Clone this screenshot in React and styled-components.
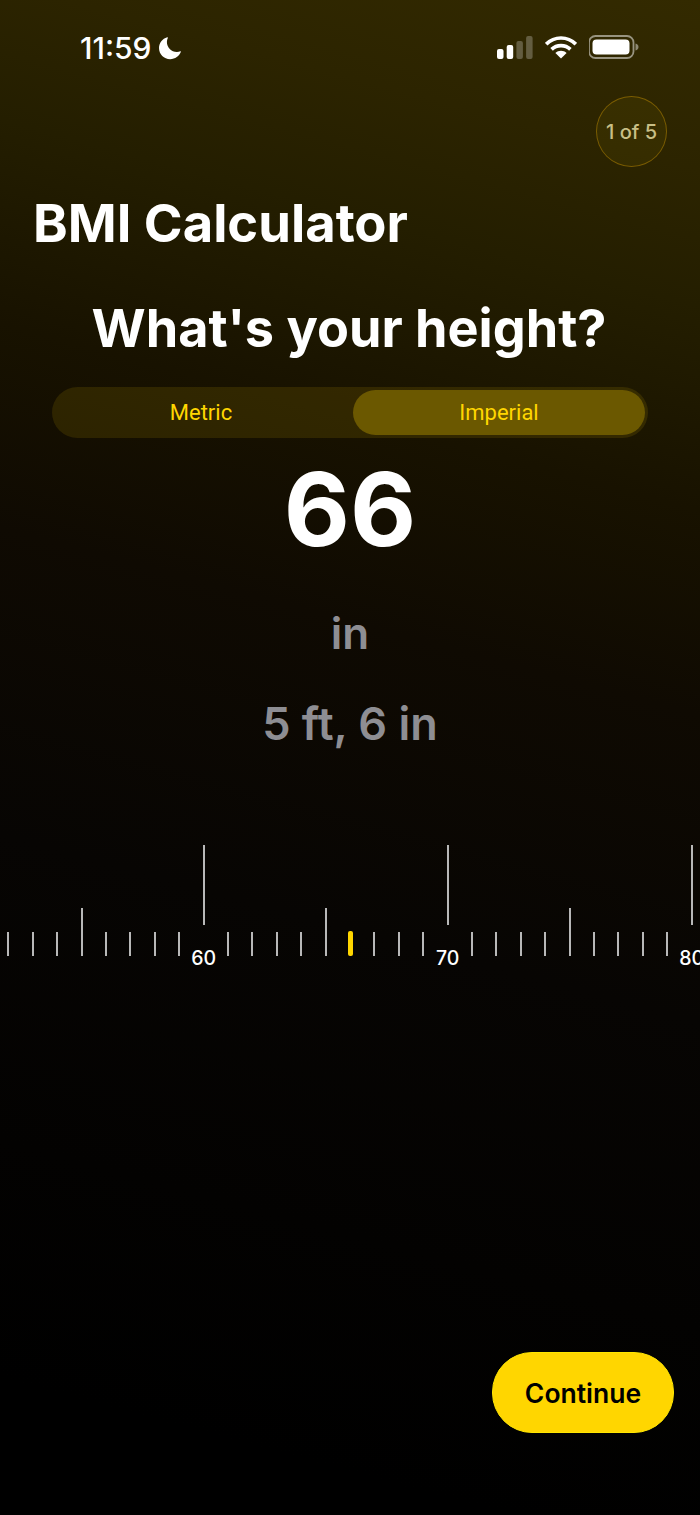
import React from 'react';
import styled, { createGlobalStyle } from 'styled-components';

const TICK_RANGE = Array.from({ length: 29 }, (_, i) => 52 + i);

export default function App() {
	return (
		<Screen>
			<GlobalStyle/>
			<StatusBar>
				<Clock>
					<Time>11:59</Time>
					<MoonIcon/>
				</Clock>
				<StatusIcons>
					<SignalIcon/>
					<WifiIcon/>
					<BatteryIcon/>
				</StatusIcons>
			</StatusBar>
			<StepRow>
				<StepBadge>1 of 5</StepBadge>
			</StepRow>
			<Title>BMI Calculator</Title>
			<Question>What's your height?</Question>
			<UnitToggle>
				<UnitOption>Metric</UnitOption>
				<UnitOption $active>Imperial</UnitOption>
			</UnitToggle>
			<Value>66</Value>
			<Unit>in</Unit>
			<Converted>5 ft, 6 in</Converted>
			<Ruler/>
			<Footer>
				<ContinueButton>Continue</ContinueButton>
			</Footer>
		</Screen>
	);
}

function Ruler() {
	return (
		<RulerTrack>
			{TICK_RANGE.map(n => (
				<TickSlot key={n} $major={n % 10 === 0}>
					{n % 10 === 0 ? (
						<>
							<Tick $kind="major"/>
							<TickLabel>{n}</TickLabel>
						</>
					) : (
						<Tick $kind={n === 66 ? 'current' : n % 5 === 0 ? 'mid' : 'minor'}/>
					)}
				</TickSlot>
			))}
		</RulerTrack>
	);
}

function MoonIcon() {
	return (
		<svg width="24" height="24" viewBox="0 0 24 24">
			<path
				fill="#fff"
				d="M9.2 1.200C4.400 2.600 1 7 1 12.100 1 18.400 6 23.200 12.200 23.200c4.900 0 9.100-3.100 10.700-7.400.1-.4-.2-.6-.5-.5-1.100.4-2.200.6-3.500.6-5.600 0-10-4.400-10-9.900 0-1.400.3-2.900.9-4.100.2-.4-.2-.8-.6-.7z"
				/>
		</svg>
	);
}

function SignalIcon() {
	return (
		<svg width="36" height="23" viewBox="0 0 36 23">
			<rect x="0" y="13" width="6.500" height="10" rx="2" fill="#fff"/>
			<rect x="9.700" y="9" width="6.500" height="14" rx="2" fill="#fff"/>
			<rect x="19.400" y="5" width="6.500" height="18" rx="2" fill="#fff" fillOpacity="0.25"/>
			<rect x="29.100" y="0" width="6.500" height="23" rx="2" fill="#fff" fillOpacity="0.25"/>
		</svg>
	);
}

function WifiIcon() {
	return (
		<svg width="32" height="23" viewBox="0 0 32 23" fill="none" stroke="#fff" strokeWidth="3.600">
			<path d="M1.200 8.200C9.400 0 22.600 0 30.800 8.200"/>
			<path d="M6.600 13.400c5.200-5.100 13.600-5.100 18.800 0"/>
			<path fill="#fff" stroke="none" d="M16 22.600l-5.600-5.700c3.100-3 8.100-3 11.200 0z"/>
		</svg>
	);
}

function BatteryIcon() {
	return (
		<svg width="51" height="24" viewBox="1 0 51 24" fill="none">
			<rect x="1" y="1" width="44.500" height="22" rx="6.500" stroke="#fff" strokeOpacity="0.5" strokeWidth="1.800"/>
			<rect x="4.500" y="4.500" width="37" height="15" rx="4" fill="#fff"/>
			<path d="M47.500 8.500c1.800.4 3 1.800 3 3.500s-1.200 3.100-3 3.500z" fill="#fff" fillOpacity="0.45"/>
		</svg>
	);
}

const GlobalStyle = createGlobalStyle`
	html, body {
		margin: 0;
		background: #000;
	}
	* {
		box-sizing: border-box;
	}
`;

const Screen = styled.div`
	display: flex;
	flex-direction: column;
	width: 700px;
	height: 1515px;
	overflow: hidden;
	font-family: Inter, "Liberation Sans", sans-serif;
	color: #fff;
	background: linear-gradient(195deg, #332a00 0%, #2c2400 10%, #241e00 18%, #181200 30%, #0f0a02 42%, #070503 60%, #030201 78%, #000 92%);
`;

const StatusBar = styled.div`
	display: flex;
	align-items: center;
	justify-content: space-between;
	height: 24px;
	margin-top: 36px;
	padding: 0 60px 0 80px;
`;

const Clock = styled.div`
	display: flex;
	align-items: center;
	gap: 7px;
`;

const Time = styled.span`
	font-size: 30px;
	font-weight: 500;
	line-height: 24px;
`;

const StatusIcons = styled.div`
	display: flex;
	align-items: center;
	gap: 12px;
	margin-top: -2px;
`;

const StepRow = styled.div`
	display: flex;
	justify-content: flex-end;
	margin-top: 36px;
	padding-right: 33px;
`;

const StepBadge = styled.div`
	display: flex;
	align-items: center;
	justify-content: center;
	width: 71px;
	height: 71px;
	border: 1.500px solid rgba(190, 140, 0, 0.5);
	border-radius: 50%;
	background: rgba(255, 214, 0, 0.05);
	font-size: 20px;
	font-weight: 500;
	color: #c8bf86;
`;

const Title = styled.h1`
	margin: 20px 0 0;
	padding-left: 33px;
	font-size: 52.500px;
	font-weight: 700;
	line-height: 72px;
`;

const Question = styled.h2`
	margin: 33px 0 0;
	padding-right: 2px;
	font-size: 52.200px;
	font-weight: 700;
	line-height: 72px;
	text-align: center;
`;

const UnitToggle = styled.div`
	display: grid;
	grid-template-columns: 1fr 1fr;
	gap: 6px;
	align-items: center;
	width: 596px;
	height: 51px;
	margin: 23px 0 0 52px;
	padding: 3px;
	border-radius: 26px;
	background: rgba(255, 214, 0, 0.11);
`;

const UnitOption = styled.div`
	display: flex;
	align-items: center;
	justify-content: center;
	height: 45px;
	border-radius: 23px;
	background: ${props => props.$active ? '#6b5800' : 'transparent'};
	font-family: Roboto, sans-serif;
	font-size: 22px;
	color: #ffd600;
`;

const Value = styled.div`
	margin-top: 7px;
	font-size: 102px;
	font-weight: 700;
	line-height: 128px;
	text-align: center;
`;

const Unit = styled.div`
	margin-top: 30px;
	font-size: 44px;
	font-weight: 600;
	line-height: 60px;
	text-align: center;
	color: #8e8e93;
`;

const Converted = styled.div`
	margin-top: 31px;
	font-size: 45px;
	font-weight: 600;
	line-height: 60px;
	text-align: center;
	color: #8e8e93;
`;

const RulerTrack = styled.div`
	display: flex;
	justify-content: center;
	height: 130px;
	margin-top: 91px;
	overflow: hidden;
`;

const TickSlot = styled.div`
	display: flex;
	flex: 0 0 24.420px;
	flex-direction: column;
	align-items: center;
	justify-content: ${props => props.$major ? 'flex-start' : 'flex-end'};
	min-width: 0;
	height: 111px;
`;

const tickHeights = { minor: 24, mid: 48, major: 80, current: 25 };

const Tick = styled.div`
	flex-shrink: 0;
	width: ${props => props.$kind === 'current' ? '5px' : '2px'};
	height: ${props => tickHeights[props.$kind]}px;
	border-radius: ${props => props.$kind === 'current' ? '2px' : '0'};
	background: ${props => props.$kind === 'current' ? '#ffd600' : '#b8b8b8'};
`;

const TickLabel = styled.span`
	margin-top: 22px;
	font-size: 19.500px;
	font-weight: 500;
	line-height: 22px;
	white-space: nowrap;
`;

const Footer = styled.div`
	display: flex;
	justify-content: flex-end;
	margin-top: auto;
	padding: 0 26px 82px 0;
`;

const ContinueButton = styled.button`
	width: 182px;
	height: 81px;
	border: 1px solid #ffe600;
	border-radius: 40px;
	background: #ffd600;
	font-family: Inter, sans-serif;
	font-size: 26.500px;
	font-weight: 600;
	color: #000;
`;
